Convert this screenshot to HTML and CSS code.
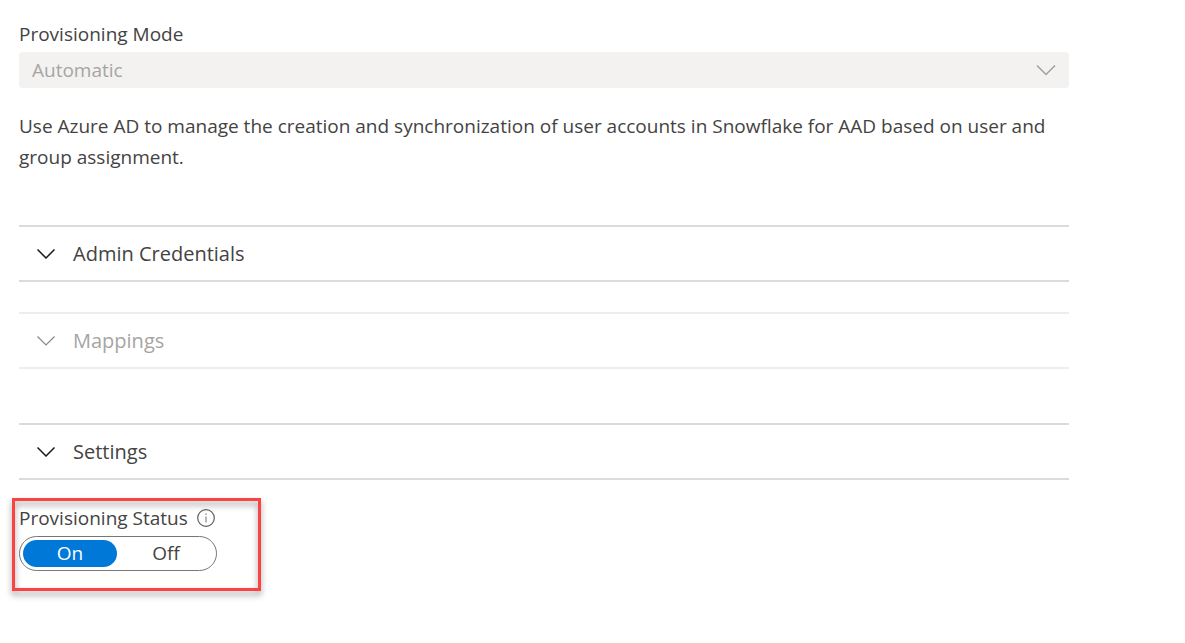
FILE: index.html
```html
<!DOCTYPE html>
<html lang="en">
<head>
  <meta charset="utf-8">
  <meta name="viewport" content="width=device-width, initial-scale=1">
  <title>Provisioning</title>
  <link rel="stylesheet" href="styles.css">
</head>
<body>
  <main class="page">
    <div class="field">
      <label class="label" for="mode">Provisioning Mode</label>
      <div class="select-wrap">
        <select class="select" id="mode" disabled>
          <option>Automatic</option>
        </select>
        <svg class="select-chevron" viewBox="0 0 20 12" aria-hidden="true"><path d="M1 1.500l9 9 9-9"/></svg>
      </div>
    </div>

    <p class="description">Use Azure AD to manage the creation and synchronization of user accounts in Snowflake for AAD based on user and group assignment.</p>

    <div class="sections">
      <button class="section" type="button" aria-expanded="false">
        <svg class="chevron" viewBox="0 0 18 10" aria-hidden="true"><path d="M0.500 0.500l8.500 8.500 8.500-8.500"/></svg>
        <span>Admin Credentials</span>
      </button>
      <button class="section section-disabled" type="button" aria-expanded="false" disabled>
        <svg class="chevron" viewBox="0 0 18 10" aria-hidden="true"><path d="M0.500 0.500l8.500 8.500 8.500-8.500"/></svg>
        <span>Mappings</span>
      </button>
      <button class="section section-settings" type="button" aria-expanded="false">
        <svg class="chevron" viewBox="0 0 18 10" aria-hidden="true"><path d="M0.500 0.500l8.500 8.500 8.500-8.500"/></svg>
        <span>Settings</span>
      </button>
    </div>

    <div class="status" role="radiogroup" aria-labelledby="status-label">
      <div class="status-heading">
        <span class="label" id="status-label">Provisioning Status</span>
        <svg class="info" viewBox="0 0 18 18" aria-hidden="true">
          <circle cx="9" cy="9" r="8.300"/>
          <path class="info-mark" d="M9 7.500v6M9 4.500v1.500"/>
        </svg>
      </div>
      <div class="toggle">
        <label class="option"><input type="radio" name="status" value="on" checked><span>On</span></label>
        <label class="option"><input type="radio" name="status" value="off"><span>Off</span></label>
      </div>
    </div>
  </main>
</body>
</html>
```
FILE: styles.css
```css
* {
  box-sizing: border-box;
}

body {
  margin: 0;
  background: #fff;
  color: #444342;
  font-family: "Segoe UI", "Open Sans", "Noto Sans", sans-serif;
  font-size: 19px;
}

.page {
  padding: 20px 116px 40px 19px;
}

.label {
  display: block;
  line-height: 28px;
}

.select-wrap {
  display: grid;
  align-items: center;
  margin-top: 4px;
}

.select,
.select-chevron {
  grid-area: 1 / 1;
}

.select {
  width: 100%;
  height: 36px;
  padding: 0 48px 0 13px;
  border: 0;
  border-radius: 3px;
  appearance: none;
  background: #f3f2f1;
  color: #a6a5a4;
  font: inherit;
  opacity: 1;
}

.select-chevron {
  justify-self: end;
  width: 20px;
  height: 12px;
  margin-right: 13px;
  fill: none;
  stroke: #a19f9d;
  stroke-width: 1.5;
  pointer-events: none;
}

.description {
  margin: 23px 0 0;
  line-height: 31px;
}

.sections {
  display: flex;
  flex-direction: column;
  gap: 30px;
  margin-top: 52px;
}

.section {
  display: flex;
  align-items: center;
  gap: 18px;
  width: 100%;
  height: 57px;
  padding: 0 18px;
  border: solid #dbdbdb;
  border-width: 2px 0;
  background: none;
  color: inherit;
  font: inherit;
  font-size: 20px;
  text-align: left;
}

.section-disabled {
  border-color: #eeeded;
  color: #a6a5a4;
}

.section-settings {
  margin-top: 24px;
}

.chevron {
  width: 18px;
  height: 10px;
  fill: none;
  stroke: #1b1a19;
  stroke-width: 1.5;
}

.section-disabled .chevron {
  stroke: #8a8886;
  stroke-width: 1.2;
}

.status {
  position: relative;
  width: fit-content;
  margin-top: 24px;
}

/* Highlight frame around the status control */
.status::after {
  content: "";
  position: absolute;
  inset: -6px -44px -20px -7px;
  border: 3px solid #fb4343;
  filter: drop-shadow(0 4px 3px rgba(0, 0, 0, 0.4));
  pointer-events: none;
}

.status-heading {
  display: flex;
  align-items: center;
  gap: 9px;
}

.info {
  width: 18px;
  height: 18px;
  fill: none;
  stroke: #605e5c;
  stroke-width: 1.2;
}

.info-mark {
  stroke: #8a8886;
}

.toggle {
  display: flex;
  gap: 2px;
  width: 198px;
  height: 35px;
  margin-top: 4px;
  padding: 3px;
  border: 1px solid #797775;
  border-radius: 18px;
}

.option {
  position: relative;
  display: flex;
  flex: 1;
}

.option input {
  position: absolute;
  inset: 0;
  width: 100%;
  height: 100%;
  margin: 0;
  opacity: 0;
}

.option span {
  flex: 1;
  border-radius: 14px;
  line-height: 27px;
  text-align: center;
}

.option input:checked + span {
  background: #0078d7;
  color: #fff;
}
```
